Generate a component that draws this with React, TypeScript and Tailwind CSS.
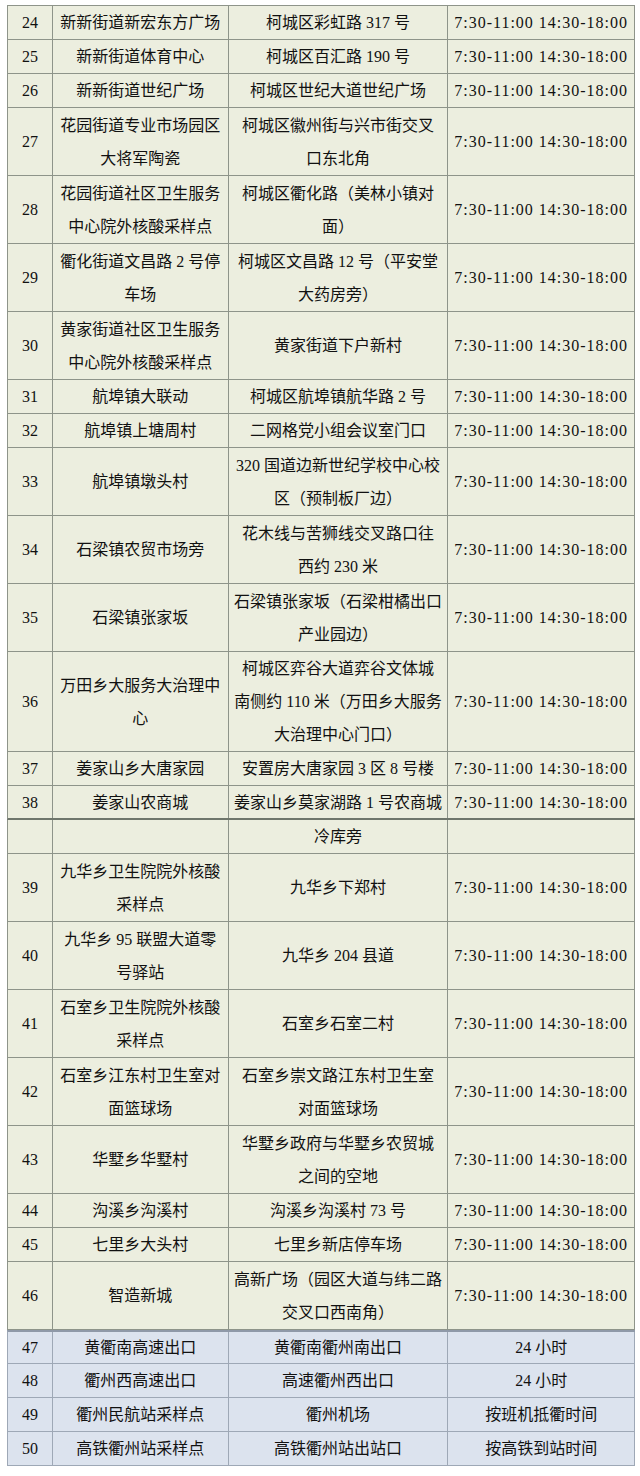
type Row = {
  no: string;
  name: string[];
  addr: string[];
  time: string;
  h: number;
  blue?: boolean;
  thick?: boolean;
};

const T = "7:30-11:00 14:30-18:00";

const rows: Row[] = [
  { no: "24", name: ["新新街道新宏东方广场"], addr: ["柯城区彩虹路 317 号"], time: T, h: 34 },
  { no: "25", name: ["新新街道体育中心"], addr: ["柯城区百汇路 190 号"], time: T, h: 34 },
  { no: "26", name: ["新新街道世纪广场"], addr: ["柯城区世纪大道世纪广场"], time: T, h: 34 },
  { no: "27", name: ["花园街道专业市场园区", "大将军陶瓷"], addr: ["柯城区徽州街与兴市街交叉", "口东北角"], time: T, h: 68 },
  { no: "28", name: ["花园街道社区卫生服务", "中心院外核酸采样点"], addr: ["柯城区衢化路（美林小镇对", "面）"], time: T, h: 68 },
  { no: "29", name: ["衢化街道文昌路 2 号停", "车场"], addr: ["柯城区文昌路 12 号（平安堂", "大药房旁）"], time: T, h: 68 },
  { no: "30", name: ["黄家街道社区卫生服务", "中心院外核酸采样点"], addr: ["黄家街道下户新村"], time: T, h: 68 },
  { no: "31", name: ["航埠镇大联动"], addr: ["柯城区航埠镇航华路 2 号"], time: T, h: 34 },
  { no: "32", name: ["航埠镇上塘周村"], addr: ["二网格党小组会议室门口"], time: T, h: 34 },
  { no: "33", name: ["航埠镇墩头村"], addr: ["320 国道边新世纪学校中心校", "区（预制板厂边）"], time: T, h: 68 },
  { no: "34", name: ["石梁镇农贸市场旁"], addr: ["花木线与苦狮线交叉路口往", "西约 230 米"], time: T, h: 68 },
  { no: "35", name: ["石梁镇张家坂"], addr: ["石梁镇张家坂（石梁柑橘出口", "产业园边）"], time: T, h: 68 },
  { no: "36", name: ["万田乡大服务大治理中", "心"], addr: ["柯城区弈谷大道弈谷文体城", "南侧约 110 米（万田乡大服务", "大治理中心门口）"], time: T, h: 100 },
  { no: "37", name: ["姜家山乡大唐家园"], addr: ["安置房大唐家园 3 区 8 号楼"], time: T, h: 34 },
  { no: "38", name: ["姜家山农商城"], addr: ["姜家山乡莫家湖路 1 号农商城"], time: T, h: 34, thick: true },
  { no: "", name: [], addr: ["冷库旁"], time: "", h: 34 },
  { no: "39", name: ["九华乡卫生院院外核酸", "采样点"], addr: ["九华乡下郑村"], time: T, h: 68 },
  { no: "40", name: ["九华乡 95 联盟大道零", "号驿站"], addr: ["九华乡 204 县道"], time: T, h: 68 },
  { no: "41", name: ["石室乡卫生院院外核酸", "采样点"], addr: ["石室乡石室二村"], time: T, h: 68 },
  { no: "42", name: ["石室乡江东村卫生室对", "面篮球场"], addr: ["石室乡崇文路江东村卫生室", "对面篮球场"], time: T, h: 68 },
  { no: "43", name: ["华墅乡华墅村"], addr: ["华墅乡政府与华墅乡农贸城", "之间的空地"], time: T, h: 68 },
  { no: "44", name: ["沟溪乡沟溪村"], addr: ["沟溪乡沟溪村 73 号"], time: T, h: 34 },
  { no: "45", name: ["七里乡大头村"], addr: ["七里乡新店停车场"], time: T, h: 34 },
  { no: "46", name: ["智造新城"], addr: ["高新广场（园区大道与纬二路", "交叉口西南角）"], time: T, h: 68 },
  { no: "47", name: ["黄衢南高速出口"], addr: ["黄衢南衢州南出口"], time: "24 小时", h: 34, blue: true },
  { no: "48", name: ["衢州西高速出口"], addr: ["高速衢州西出口"], time: "24 小时", h: 34, blue: true },
  { no: "49", name: ["衢州民航站采样点"], addr: ["衢州机场"], time: "按班机抵衢时间", h: 34, blue: true },
  { no: "50", name: ["高铁衢州站采样点"], addr: ["高铁衢州站出站口"], time: "按高铁到站时间", h: 34, blue: true },
];

function Cell({ lines, className }: { lines: string[]; className: string }) {
  return (
    <div className={`flex flex-col items-center justify-center text-center border-r ${className}`}>
      {lines.map((l, i) => (
        <div key={i} className="leading-[33px] whitespace-nowrap">
          {l}
        </div>
      ))}
    </div>
  );
}

function TableRow({ row, first }: { row: Row; first: boolean }) {
  const bc = row.blue ? "border-[#9ea8b6]" : "border-[#8e948a]";
  const bg = row.blue ? "bg-[#dce3ee]" : "bg-[#eceedf]";
  const bottom = row.thick ? "border-b-2 border-b-[#6f766c]" : "border-b";
  const top = row.blue && first ? "border-t-2 border-t-[#8f99a8]" : "";
  return (
    <div className={`flex border-l ${bc} ${bg} ${bottom} ${top}`} style={{ height: row.h }}>
      <Cell lines={row.no ? [row.no] : []} className={`w-[45px] ${bc}`} />
      <Cell lines={row.name} className={`w-[176px] ${bc}`} />
      <Cell lines={row.addr} className={`w-[220px] ${bc}`} />
      <Cell
        lines={row.time ? [row.time] : []}
        className={`w-[187px] ${bc} ${row.time === T ? "tracking-[1px]" : ""}`}
      />
    </div>
  );
}

export default function App() {
  return (
    <div className="w-[640px] h-[1476px] bg-white pt-[5px] pl-[7px]">
      <div
        className="w-[628px] border-t border-[#8e948a] text-[16px] text-[#111111]"
        style={{ fontFamily: '"Liberation Serif", "Noto Sans CJK SC", serif' }}
      >
        {rows.map((r, i) => (
          <TableRow key={i} row={r} first={r.blue === true && !rows[i - 1]?.blue} />
        ))}
      </div>
    </div>
  );
}
